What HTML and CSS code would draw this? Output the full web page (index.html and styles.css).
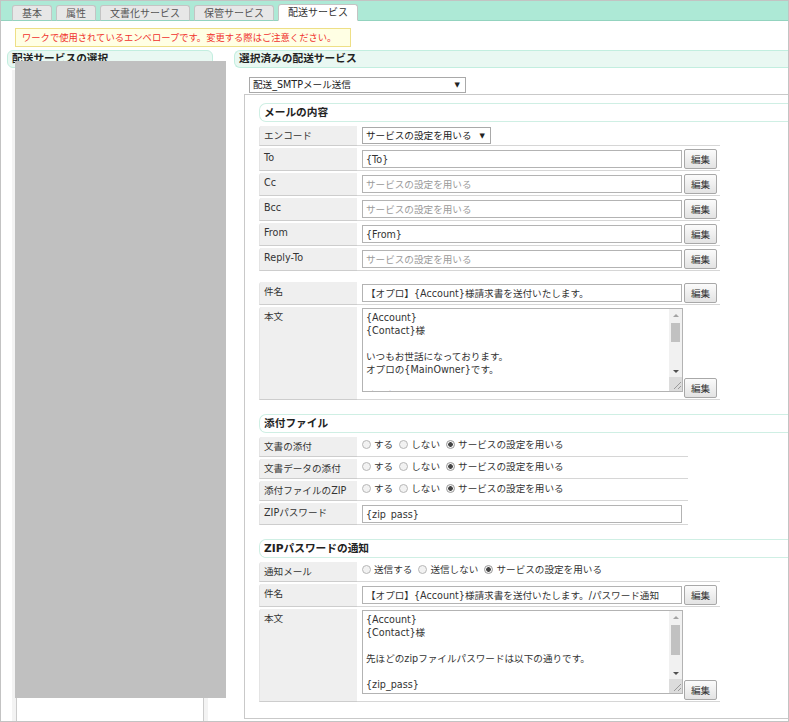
FILE: index.html
```html
<!DOCTYPE html>
<html lang="ja">
<head>
	<meta charset="utf-8">
	<title>配送サービス</title>
	<link rel="stylesheet" href="styles.css">
</head>
<body>
	<div class="frame">
		<ul class="tabs">
			<li>基本</li>
			<li>属性</li>
			<li>文書化サービス</li>
			<li>保管サービス</li>
			<li class="active">配送サービス</li>
		</ul>
		<div class="notice">ワークで使用されているエンベロープです。変更する際はご注意ください。</div>
		<div class="columns">
			<div class="col-left">
				<h2 class="caption">配送サービスの選択</h2>
				<div class="list-wrap">
					<div class="list-box"></div>
				</div>
			</div>
			<div class="col-right">
				<h2 class="caption">選択済みの配送サービス</h2>
				<div class="picker">
					<div class="select wide"><span>配送_SMTPメール送信</span><span class="arrow">▼</span></div>
				</div>
				<div class="panel">
					<h3 class="section">メールの内容</h3>
					<table class="form">
						<tr>
							<th>エンコード</th>
							<td><div class="select small"><span>サービスの設定を用いる</span><span class="arrow">▼</span></div></td>
						</tr>
						<tr>
							<th>To</th>
							<td><div class="field"><input class="text" type="text" value="{To}"><button type="button" class="edit">編集</button></div></td>
						</tr>
						<tr>
							<th>Cc</th>
							<td><div class="field"><input class="text" type="text" placeholder="サービスの設定を用いる"><button type="button" class="edit">編集</button></div></td>
						</tr>
						<tr>
							<th>Bcc</th>
							<td><div class="field"><input class="text" type="text" placeholder="サービスの設定を用いる"><button type="button" class="edit">編集</button></div></td>
						</tr>
						<tr>
							<th>From</th>
							<td><div class="field"><input class="text" type="text" value="{From}"><button type="button" class="edit">編集</button></div></td>
						</tr>
						<tr>
							<th>Reply-To</th>
							<td><div class="field"><input class="text" type="text" placeholder="サービスの設定を用いる"><button type="button" class="edit">編集</button></div></td>
						</tr>
					</table>
					<table class="form">
						<tr>
							<th>件名</th>
							<td><div class="field"><input class="text" type="text" value="【オプロ】{Account}様請求書を送付いたします。"><button type="button" class="edit">編集</button></div></td>
						</tr>
						<tr>
							<th>本文</th>
							<td>
								<div class="field area">
									<div class="textbox">
										<textarea class="body">{Account}
{Contact}様

いつもお世話になっております。
オプロの{MainOwner}です。

請求書を送付いたします。
添付ファイルをご確認ください。

今後ともよろしくお願いいたします。</textarea>
										<div class="vbar">
											<span class="vbtn"><i class="tri up"></i></span>
											<span class="vtrack"><span class="vthumb"></span></span>
											<span class="vbtn"><i class="tri down"></i></span>
											<span class="grip"><svg width="12" height="12" viewBox="0 0 12 12"><path d="M11 4 L4 11 M11 8 L8 11" stroke="#9a9a9a" stroke-width="1" fill="none"/></svg></span>
										</div>
									</div>
									<button type="button" class="edit">編集</button>
								</div>
							</td>
						</tr>
					</table>

					<h3 class="section">添付ファイル</h3>
					<table class="form">
						<tr>
							<th>文書の添付</th>
							<td class="choice">
								<label><input class="radio" type="radio" name="doc">する</label>
								<label><input class="radio" type="radio" name="doc">しない</label>
								<label><input class="radio" type="radio" name="doc" checked>サービスの設定を用いる</label>
							</td>
						</tr>
						<tr>
							<th>文書データの添付</th>
							<td class="choice">
								<label><input class="radio" type="radio" name="data">する</label>
								<label><input class="radio" type="radio" name="data">しない</label>
								<label><input class="radio" type="radio" name="data" checked>サービスの設定を用いる</label>
							</td>
						</tr>
						<tr>
							<th>添付ファイルのZIP</th>
							<td class="choice">
								<label><input class="radio" type="radio" name="zip">する</label>
								<label><input class="radio" type="radio" name="zip">しない</label>
								<label><input class="radio" type="radio" name="zip" checked>サービスの設定を用いる</label>
							</td>
						</tr>
						<tr>
							<th>ZIPパスワード</th>
							<td class="solo"><input class="text" type="text" value="{zip_pass}"></td>
						</tr>
					</table>

					<h3 class="section">ZIPパスワードの通知</h3>
					<table class="form">
						<tr>
							<th>通知メール</th>
							<td class="choice">
								<label><input class="radio" type="radio" name="notify">送信する</label>
								<label><input class="radio" type="radio" name="notify">送信しない</label>
								<label><input class="radio" type="radio" name="notify" checked>サービスの設定を用いる</label>
							</td>
						</tr>
						<tr>
							<th>件名</th>
							<td><div class="field"><input class="text" type="text" value="【オプロ】{Account}様請求書を送付いたします。/パスワード通知"><button type="button" class="edit">編集</button></div></td>
						</tr>
						<tr>
							<th>本文</th>
							<td>
								<div class="field area">
									<div class="textbox">
										<textarea class="body">{Account}
{Contact}様

先ほどのzipファイルパスワードは以下の通りです。

{zip_pass}

添付ファイルを開く際にご利用ください。</textarea>
										<div class="vbar">
											<span class="vbtn"><i class="tri up"></i></span>
											<span class="vtrack"><span class="vthumb long"></span></span>
											<span class="vbtn"><i class="tri down"></i></span>
											<span class="grip"><svg width="12" height="12" viewBox="0 0 12 12"><path d="M11 4 L4 11 M11 8 L8 11" stroke="#9a9a9a" stroke-width="1" fill="none"/></svg></span>
										</div>
									</div>
									<button type="button" class="edit">編集</button>
								</div>
							</td>
						</tr>
					</table>
				</div>
			</div>
		</div>
		<div class="redact"></div>
	</div>
</body>
</html>
```

FILE: styles.css
```css
* {
	box-sizing: border-box;
}

html,
body {
	margin: 0;
	padding: 0;
}

body {
	font-family: "DejaVu Sans", "Noto Sans CJK JP", sans-serif;
	font-size: 9.6px;
	line-height: 13px;
	color: #333;
	background: #fff;
}

.frame {
	position: relative;
	display: flex;
	flex-direction: column;
	width: 789px;
	height: 722px;
	border: 1px solid #c3c3c3;
	overflow: hidden;
}

/* tab bar */
.tabs {
	display: flex;
	align-items: flex-end;
	flex: none;
	height: 20px;
	margin: 0;
	padding: 0 0 0 11px;
	list-style: none;
	background: #ade9d6;
	border-bottom: 1px solid #93d3bf;
}
.tabs li {
	height: 16px;
	margin: 0 4px -1px 0;
	padding: 0 9px;
	font-size: 10px;
	line-height: 15px;
	color: #555;
	background: #e7e7e7;
	border: 1px solid #c4c4c4;
	border-bottom-color: #93d3bf;
	border-radius: 3px 3px 0 0;
}
.tabs li.active {
	height: 17px;
	color: #333;
	background: #fff;
	border-bottom-color: #fff;
}

.notice {
	align-self: flex-start;
	flex: none;
	width: 336px;
	height: 19px;
	margin: 7px 0 0 14px;
	padding: 0 6px;
	font-size: 9.3px;
	line-height: 17px;
	white-space: nowrap;
	overflow: hidden;
	color: #f0322d;
	background: #ffffe4;
	border: 1px solid #eedf86;
}

/* two columns */
.columns {
	display: flex;
	flex: 1;
	min-height: 0;
	margin-top: 3px;
}
.col-left {
	display: flex;
	flex-direction: column;
	flex: none;
	width: 206px;
	margin-left: 6px;
}
.col-right {
	display: flex;
	flex-direction: column;
	flex: 1;
	min-width: 0;
	margin-left: 21px;
}

.caption {
	flex: none;
	height: 18px;
	margin: 0;
	padding: 0 4px;
	overflow: hidden;
	font-size: 10.7px;
	font-weight: bold;
	line-height: 16px;
	color: #222;
	white-space: nowrap;
	background: #e9f8f2;
	border: 1px solid #c2eedf;
	border-radius: 6px;
}
.col-right .caption {
	margin-right: -2px;
	border-right: none;
	border-radius: 6px 0 0 6px;
}

.list-wrap {
	flex: 1;
	width: 196px;
	margin: 2px 0 0 5px;
	padding: 0 4px;
	background: #f3f3f3;
}
.list-box {
	height: 100%;
	background: #fff;
	border: 1px solid #cbcbcb;
	border-bottom: none;
}

.picker {
	flex: none;
	margin: 9px 0 0 15px;
}
.select {
	display: flex;
	align-items: center;
	justify-content: space-between;
	height: 16px;
	padding: 0 5px 0 3px;
	line-height: 14px;
	color: #222;
	background: #fff;
	border: 1px solid #a9a9a9;
}
.select.wide {
	width: 217px;
}
.select.small {
	width: 129px;
	height: 17px;
}
.arrow {
	font-size: 7px;
}

.panel {
	flex: 1;
	margin: 1px -6px 2px 10px;
	padding: 8px 0 0 14px;
	border: 1px solid #c9c9c9;
}

.section {
	height: 19px;
	margin: 0;
	padding: 0 4px;
	font-size: 10.7px;
	font-weight: bold;
	line-height: 17px;
	color: #222;
	border: 1px solid #cfefe4;
	border-right: none;
	border-radius: 7px 0 0 7px;
}
.form + .section {
	margin-top: 12px;
}

/* form tables */
.form {
	margin-top: 2px;
	border-collapse: separate;
	border-spacing: 0 2px;
}
.form + .form {
	margin-top: 7px;
}
.form th {
	width: 98px;
	padding: 3px 4px;
	font-weight: normal;
	text-align: left;
	vertical-align: top;
	white-space: nowrap;
	color: #333;
	background: #efefef;
	border-left: 1px solid #e4e4e4;
	border-bottom: 1px solid #cdcdcd;
	border-radius: 3px 0 0 0;
}
.form td {
	padding: 1px 3px 1px 5px;
	vertical-align: top;
	white-space: nowrap;
	border-bottom: 1px solid #d6d6d6;
}
.form td.solo {
	padding: 2px 6px 1px 5px;
}

.field {
	display: flex;
	align-items: center;
}
.field.area {
	align-items: flex-end;
}

.text {
	width: 320px;
	height: 18px;
	margin: 0;
	padding: 0 3px;
	font-family: inherit;
	font-size: 9.6px;
	color: #333;
	background: #fff;
	border: 1px solid #b3b3b3;
	border-radius: 0;
	outline: none;
}
.text::placeholder {
	color: #9a9a9a;
}

.edit {
	width: 33px;
	height: 20px;
	margin: 0 0 0 2px;
	padding: 0;
	font: inherit;
	color: #333;
	background: linear-gradient(#fbfbfb, #e3e3e3);
	border: 1px solid #a8a8a8;
	border-radius: 2px;
}
.area .edit {
	margin-left: 1px;
}

/* textarea with its scrollbar */
.textbox {
	display: flex;
	width: 321px;
	height: 84px;
	margin-bottom: 6px;
	background: #fff;
	border: 1px solid #b3b3b3;
}
textarea.body {
	flex: 1;
	min-width: 0;
	margin: 0;
	padding: 2px 3px;
	font: inherit;
	line-height: 13px;
	color: #333;
	border: 0;
	outline: none;
	overflow: hidden;
	resize: none;
}
.vbar {
	display: flex;
	flex-direction: column;
	flex: none;
	width: 13px;
	background: #f1f1f1;
}
.vbtn {
	display: flex;
	align-items: center;
	justify-content: center;
	height: 12px;
}
.tri {
	width: 0;
	height: 0;
	border-left: 3px solid transparent;
	border-right: 3px solid transparent;
}
.tri.up {
	border-bottom: 3px solid #a3a3a3;
}
.tri.down {
	border-top: 3px solid #505050;
}
.vtrack {
	flex: 1;
	padding: 2px 2px 0;
}
.vthumb {
	display: block;
	height: 19px;
	background: #c1c1c1;
}
.vthumb.long {
	height: 30px;
}
.grip {
	display: block;
	height: 14px;
	background: #dcdcdc;
}
.grip svg {
	display: block;
	margin: 1px 0 0 1px;
}

.choice {
	padding: 3px 3px 3px 7px;
}
.choice label {
	display: inline-flex;
	align-items: center;
	margin-right: 3px;
}
.radio {
	appearance: none;
	-webkit-appearance: none;
	width: 9px;
	height: 9px;
	margin: 0 3px 0 0;
	background: #f2f2f2;
	border: 1px solid #b7b7b7;
	border-radius: 50%;
}
.radio:checked {
	background: radial-gradient(circle, #444 0 2px, #f2f2f2 2.6px);
	border-color: #999;
}

/* masked area in the capture */
.redact {
	position: absolute;
	left: 14px;
	top: 60px;
	width: 211px;
	height: 637px;
	background: #c0c0c0;
}
```
